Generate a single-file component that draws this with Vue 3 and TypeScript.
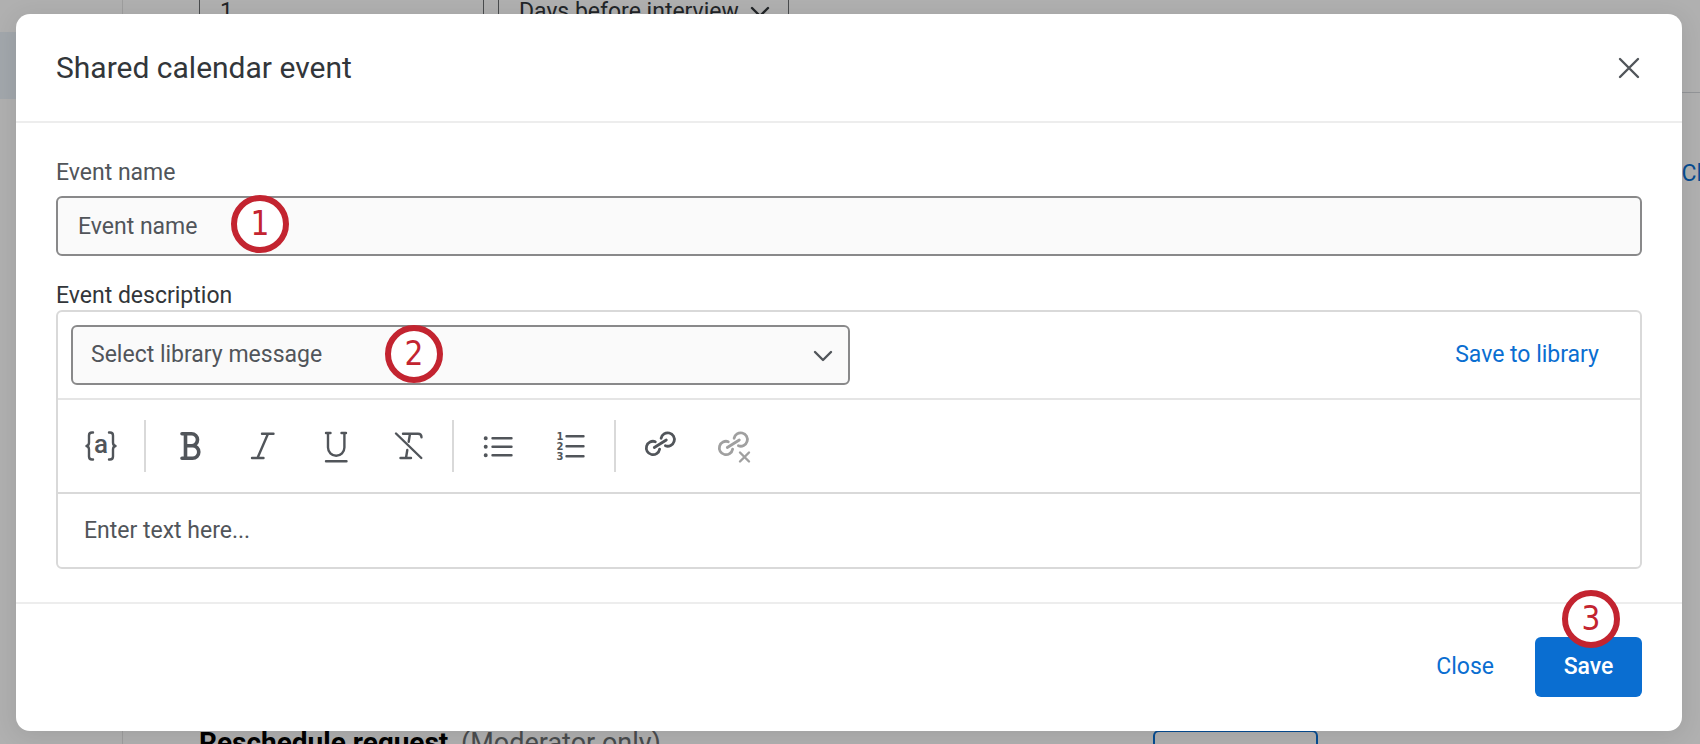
<script setup lang="ts">
import { ref } from 'vue'

const eventName = ref('')
const message = ref('')
const description = ref('')
</script>

<template>
  <div class="screen">
    <div class="page" aria-hidden="true">
      <aside class="sidebar"><div class="active-item"></div></aside>
      <main class="content">
        <div class="field-row">
          <div class="field amount">1</div>
          <div class="field unit">
            <span>Days before interview</span>
            <svg width="20" height="12" viewBox="0 0 20 12"><path d="M2 2l8 8 8-8" /></svg>
          </div>
        </div>
        <div class="rule"></div>
        <div class="link-row">Cl</div>
        <div class="request-row">
          <p><strong>Reschedule request</strong> <span>(Moderator only)</span></p>
          <div class="outline"></div>
        </div>
      </main>
    </div>

    <div class="overlay">
      <section class="dialog" role="dialog" aria-modal="true" aria-labelledby="dialog-title">
        <header class="head">
          <h1 id="dialog-title">Shared calendar event</h1>
          <button class="dismiss" type="button" aria-label="Dismiss">
            <svg width="26" height="26" viewBox="0 0 26 26"><path d="M4 4l18 18M22 4L4 22" /></svg>
          </button>
        </header>

        <div class="body">
          <label class="label muted" for="event-name">Event name</label>
          <div class="name-wrap">
            <input id="event-name" v-model="eventName" type="text" placeholder="Event name" />
            <span class="badge one">1</span>
          </div>

          <label class="label" for="event-description">Event description</label>
          <div class="editor">
            <div class="library">
              <div class="select-wrap">
                <select v-model="message" aria-label="Library message">
                  <option value="">Select library message</option>
                </select>
                <svg class="chevron" width="20" height="12" viewBox="0 0 20 12"><path d="M2 2l8 8 8-8" /></svg>
                <span class="badge two">2</span>
              </div>
              <button class="text-button" type="button">Save to library</button>
            </div>

            <div class="toolbar" role="toolbar" aria-label="Formatting">
              <button type="button" aria-label="Insert piped text">
                <svg viewBox="0 0 40 40">
                  <path d="M12 6.500h-1q-3 0-3 3v7q0 3-2.500 3.500q2.500 .5 2.500 3.500v7q0 3 3 3h1M28 6.500h1q3 0 3 3v7q0 3 2.500 3.500q-2.500 .5-2.500 3.500v7q0 3-3 3h-1" />
                  <text class="glyph-a" x="20" y="27" text-anchor="middle">a</text>
                </svg>
              </button>
              <span class="separator"></span>
              <button type="button" aria-label="Bold">
                <svg viewBox="0 0 40 40">
                  <path class="heavy" d="M12 7.700H21.500a6 6 0 0 1 0 12H15.500M21.500 19.700h1a6.300 6.300 0 0 1 0 12.600H12M15.500 7.700v24.600" />
                </svg>
              </button>
              <button type="button" aria-label="Italic">
                <svg viewBox="0 0 40 40"><path d="M19 7.700h11.500M9 32h11.500M25 7.700L14.500 32" /></svg>
              </button>
              <button type="button" aria-label="Underline">
                <svg viewBox="0 0 40 40">
                  <path d="M10 7h4.500M25.500 7H30M12 7v14.500a8.200 8.200 0 0 0 16.400 0V7M10 35.300h20.500" />
                </svg>
              </button>
              <button type="button" aria-label="Clear formatting">
                <svg viewBox="0 0 40 40">
                  <path d="M7 7.500L32.300 32M14 7.700h15q3.500 0 3.500 3.500M21 7.700l-1.300 8M18.300 24l-1.300 8M11.500 32h10.500" />
                </svg>
              </button>
              <span class="separator"></span>
              <button type="button" aria-label="Bulleted list">
                <svg viewBox="0 0 40 40">
                  <path d="M14.500 12.300h19M14.500 20.700h19M14.500 29.300h19" />
                  <path class="dots" d="M7.700 12.300h.01M7.700 20.700h.01M7.700 29.300h.01" />
                </svg>
              </button>
              <button type="button" aria-label="Numbered list">
                <svg viewBox="0 0 40 40">
                  <path d="M15.500 10.300h17M15.500 20.200h17M15.500 30.200h17" />
                  <g class="digits" text-anchor="middle">
                    <text x="9" y="14">1</text>
                    <text x="9" y="24">2</text>
                    <text x="9" y="34">3</text>
                  </g>
                </svg>
              </button>
              <span class="separator"></span>
              <button type="button" aria-label="Insert link">
                <svg viewBox="0 0 40 40">
                  <path class="chain" d="M15.300 15.700A6.700 6.700 0 1 0 19.600 23.200M21.100 12.300A6.700 6.700 0 1 1 25.400 19.800M14.300 21.500L26.300 14" />
                </svg>
              </button>
              <button type="button" aria-label="Remove link" disabled>
                <svg viewBox="0 0 40 40">
                  <path class="chain" d="M15.300 15.700A6.700 6.700 0 1 0 19.600 23.200M21.100 12.300A6.700 6.700 0 1 1 25.400 19.800M14.300 21.500L26.300 14" />
                  <path d="M27 26.500l9 9M36 26.500l-9 9" />
                </svg>
              </button>
            </div>

            <textarea id="event-description" v-model="description" rows="1" placeholder="Enter text here..."></textarea>
          </div>
        </div>

        <footer class="foot">
          <button class="text-button" type="button">Close</button>
          <div class="save-wrap">
            <button class="save" type="button">Save</button>
            <span class="badge three">3</span>
          </div>
        </footer>
      </section>
    </div>
  </div>
</template>

<style>
body {
  margin: 0;
}
</style>

<style scoped>
* {
  box-sizing: border-box;
}

.screen {
  display: grid;
  min-height: 100vh;
  overflow: hidden;
  font-family: Roboto, "Liberation Sans", sans-serif;
  font-size: 23px;
  line-height: 28px;
  color: #32363a;
}

.page,
.overlay {
  grid-area: 1 / 1;
  min-width: 0;
}

.page {
  display: flex;
  contain: size;
  overflow: hidden;
  background: #fcfcfc;
}

.sidebar {
  flex: 0 0 123px;
  padding-top: 32px;
  border-right: 1px solid #e3e3e3;
}

.active-item {
  height: 67px;
  background: #e8eff7;
}

.content {
  flex: 1;
  min-width: 0;
  display: flex;
  flex-direction: column;
}

.field-row {
  display: flex;
  gap: 14px;
  margin: -18px 0 0 76px;
}

.field {
  display: flex;
  align-items: center;
  justify-content: space-between;
  height: 60px;
  padding: 0 18px 0 20px;
  border: 1px solid #6a6d70;
}

.amount {
  width: 285px;
}

.unit {
  width: 291px;
}

.rule {
  margin-top: 50px;
  border-top: 1px solid #d3d6da;
}

.link-row {
  margin: 67px -2px 0 0;
  text-align: right;
  color: #0a6ed1;
}

.request-row {
  display: flex;
  justify-content: space-between;
  margin: auto 382px -42px 76px;
}

.request-row p {
  margin: 0;
  font-size: 27px;
  line-height: 26px;
}

.request-row strong {
  margin-right: 6px;
  font-size: 28px;
  color: #000000;
}

.request-row span {
  color: #6a6d70;
}

.outline {
  width: 165px;
  height: 56px;
  border: 2px solid #0a6ed1;
  border-radius: 6px;
}

.overlay {
  position: relative;
  display: flex;
  align-items: flex-start;
  padding: 14px 18px 13px 16px;
  background: rgba(0, 0, 0, 0.3);
}

.dialog {
  flex: 1;
  min-width: 0;
  border-radius: 14px;
  background: #ffffff;
  box-shadow: 0 4px 24px rgba(0, 0, 0, 0.1);
}

.head {
  display: flex;
  align-items: center;
  justify-content: space-between;
  height: 109px;
  padding: 0 40px;
  border-bottom: 2px solid #ededed;
}

h1 {
  margin: 0;
  font-size: 30px;
  line-height: 36px;
  font-weight: 400;
}

button {
  padding: 0;
  border: 0;
  background: none;
  color: inherit;
  font: inherit;
  cursor: pointer;
}

.dismiss {
  display: flex;
  color: #51555a;
}

svg {
  fill: none;
  stroke: currentColor;
  stroke-width: 2.4;
  stroke-linecap: round;
  stroke-linejoin: round;
}

.body {
  padding: 36px 40px 33px;
}

.label {
  display: block;
}

.muted {
  color: #51555a;
}

.name-wrap {
  position: relative;
  margin: 9px 0 26px;
}

input,
select {
  display: block;
  width: 100%;
  height: 60px;
  padding: 0 20px;
  border: 2px solid #89898a;
  border-radius: 6px;
  background: #fafafa;
  color: #51555a;
  font: inherit;
  appearance: none;
}

input::placeholder,
textarea::placeholder {
  color: #51555a;
  opacity: 1;
}

select {
  padding: 0 18px;
}

.editor {
  border: 2px solid #d9d9d9;
  border-radius: 6px;
}

.library {
  display: flex;
  align-items: center;
  justify-content: space-between;
  padding: 13px 41px 13px 13px;
  border-bottom: 2px solid #e5e5e5;
}

.select-wrap {
  position: relative;
  width: 51%;
}

.chevron {
  position: absolute;
  top: 25px;
  right: 17px;
  color: #51555a;
  pointer-events: none;
}

.text-button {
  color: #0a6ed1;
}

.toolbar {
  display: flex;
  align-items: center;
  height: 94px;
  padding: 0 6px;
  border-bottom: 2px solid #d9d9d9;
  color: #51555a;
}

.toolbar button {
  display: grid;
  place-items: center;
  width: 73px;
  height: 56px;
}

.toolbar button:disabled {
  color: #a0a0a0;
}

.toolbar svg {
  width: 40px;
  height: 40px;
}

.separator {
  width: 2px;
  height: 52px;
  margin: 0 7px;
  background: #d9d9d9;
}

.heavy {
  stroke-width: 3.6;
}

.dots {
  stroke-width: 4;
}

.chain {
  stroke-width: 2.8;
}

.toolbar text {
  fill: currentColor;
  stroke: none;
}

.glyph-a {
  font: 500 26px Roboto, sans-serif;
}

.digits {
  font: 700 10px "DejaVu Sans", sans-serif;
}

textarea {
  display: block;
  width: 100%;
  height: 73px;
  padding: 23px 26px 22px;
  border: 0;
  border-radius: 6px;
  background: transparent;
  color: #51555a;
  font: inherit;
  resize: none;
}

.foot {
  display: flex;
  align-items: center;
  justify-content: flex-end;
  gap: 41px;
  padding: 33px 40px 34px;
  border-top: 2px solid #ededed;
}

.save-wrap {
  position: relative;
}

.save {
  min-width: 107px;
  height: 60px;
  padding: 0 26px;
  border-radius: 6px;
  background: #0a6ed1;
  color: #ffffff;
  font-weight: 500;
}

.badge {
  position: absolute;
  display: grid;
  place-items: center;
  width: 58px;
  height: 58px;
  border: 6px solid #c32430;
  border-radius: 50%;
  background: #ffffff;
  color: #c32430;
  font: 33px/40px "DejaVu Sans Condensed", "DejaVu Sans", sans-serif;
  pointer-events: none;
}

.one {
  top: -1px;
  left: 175px;
}

.two {
  top: 0;
  left: 314px;
}

.three {
  top: -47px;
  right: 22px;
}
</style>
